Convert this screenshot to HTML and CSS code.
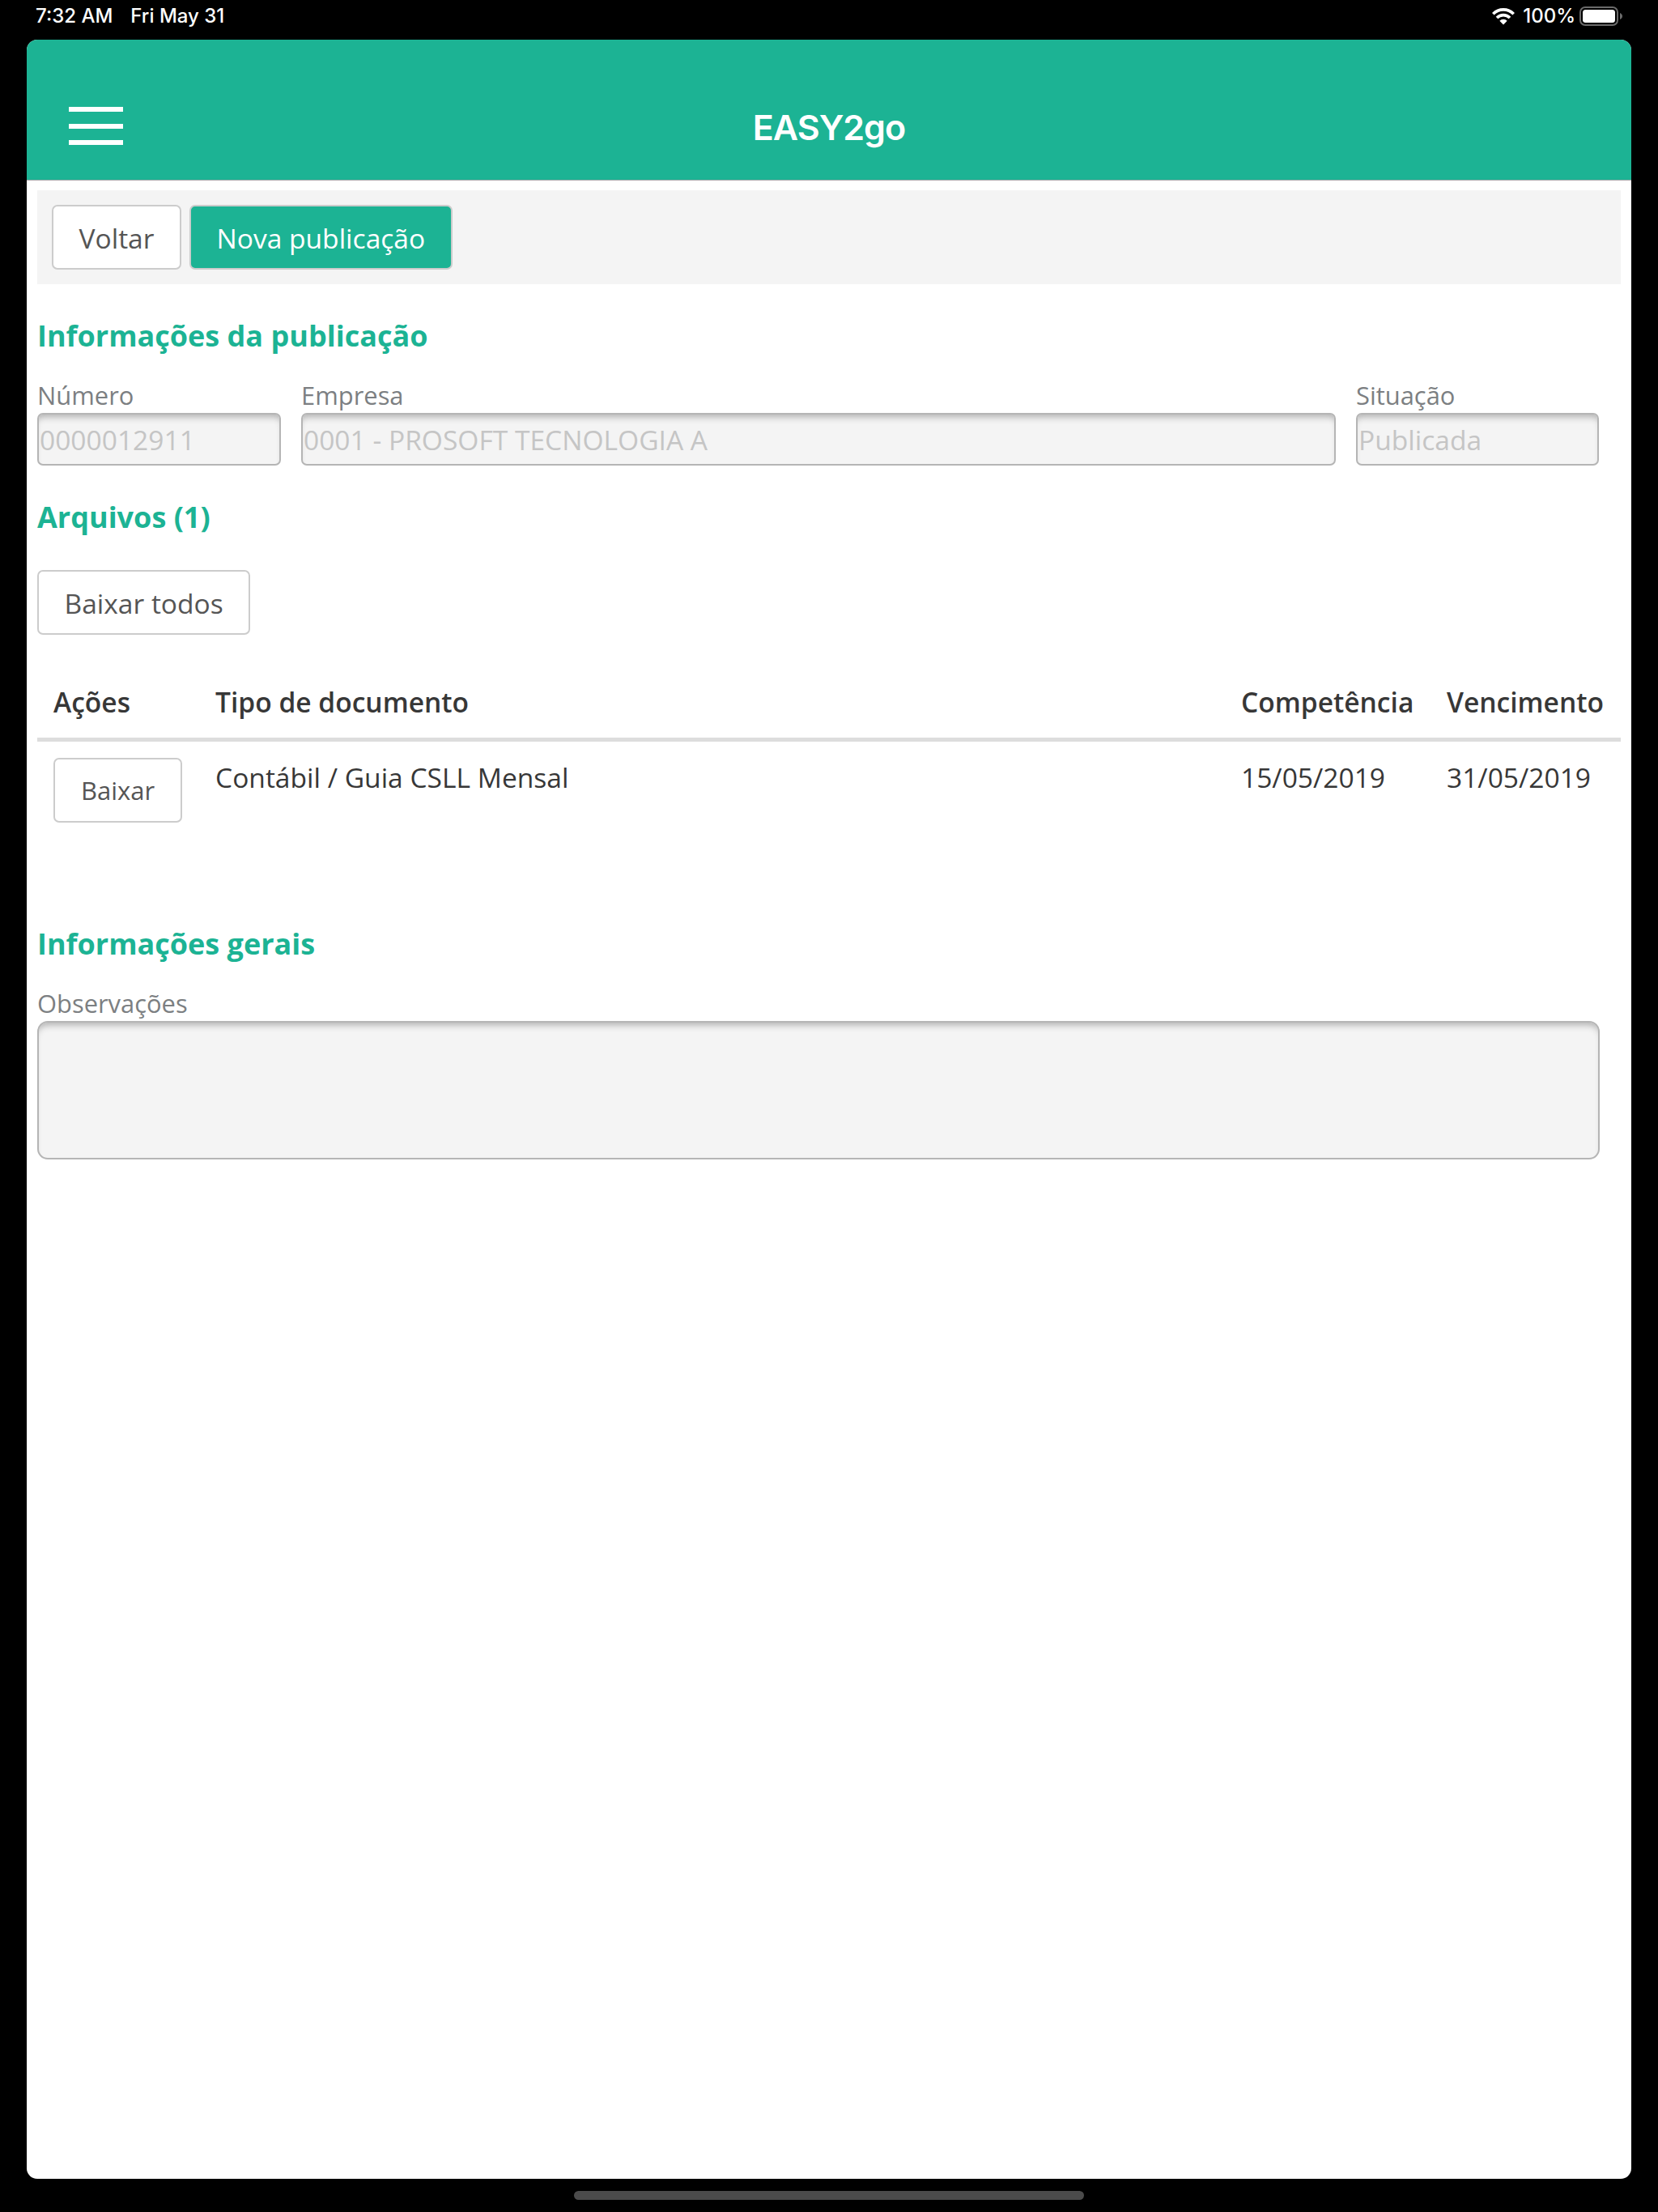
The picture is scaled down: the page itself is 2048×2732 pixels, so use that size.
FILE: index.html
```html
<!DOCTYPE html>
<html lang="pt-BR">
    <head>
        <meta charset="UTF-8">
        <title>EASY2go</title>
        <link rel="stylesheet" href="styles.css">
    </head>
    <body>
        <div class="status-bar">
            <div class="status-left">
                <span class="status-time">7:32 AM</span>
                <span class="status-date">Fri May 31</span>
            </div>
            <div class="status-right">
                <svg class="wifi" viewBox="0 0 28 21" width="28" height="21">
                    <g fill="none" stroke="#fff" stroke-width="3.7">
                        <path d="M1.3 7.2a18 18 0 0 1 25.4 0"/>
                        <path d="M6 12a11.4 11.4 0 0 1 16 0"/>
                    </g>
                    <path fill="#fff" d="M14 20.5l-4.7-4.8a6.8 6.8 0 0 1 9.4 0z"/>
                </svg>
                <span class="status-percent">100%</span>
                <svg class="battery" viewBox="0 0 54 24" width="54" height="24">
                    <rect x="1" y="1" width="46" height="22" rx="6" fill="none" stroke="#6b6b6b" stroke-width="2"/>
                    <rect x="4" y="4" width="40" height="16" rx="3.5" fill="#fff"/>
                    <path fill="#6b6b6b" d="M50 8c4 1.5 4 6.500 0 8z"/>
                </svg>
            </div>
        </div>
        <div class="app">
            <header class="app-header">
                <div class="menu-button">
                    <span></span>
                    <span></span>
                    <span></span>
                </div>
                <div class="app-title">EASY2go</div>
            </header>
            <main class="content">
                <div class="toolbar">
                    <button class="btn">Voltar</button>
                    <button class="btn btn-primary">Nova publicação</button>
                </div>

                <h2>Informações da publicação</h2>
                <div class="fields">
                    <div class="field">
                        <label for="numero">Número</label>
                        <input id="numero" type="text" value="0000012911" disabled>
                    </div>
                    <div class="field">
                        <label for="empresa">Empresa</label>
                        <input id="empresa" type="text" value="0001 - PROSOFT TECNOLOGIA A" disabled>
                    </div>
                    <div class="field">
                        <label for="situacao">Situação</label>
                        <input id="situacao" type="text" value="Publicada" disabled>
                    </div>
                </div>

                <h2>Arquivos (1)</h2>
                <button class="btn btn-all">Baixar todos</button>
                <table class="files">
                    <thead>
                        <tr>
                            <th class="col-actions">Ações</th>
                            <th>Tipo de documento</th>
                            <th class="col-period">Competência</th>
                            <th class="col-due">Vencimento</th>
                        </tr>
                    </thead>
                    <tbody>
                        <tr>
                            <td class="cell-actions"><button class="btn btn-small">Baixar</button></td>
                            <td>Contábil / Guia CSLL Mensal</td>
                            <td>15/05/2019</td>
                            <td>31/05/2019</td>
                        </tr>
                    </tbody>
                </table>

                <h2 class="general">Informações gerais</h2>
                <div class="field field-notes">
                    <label for="observacoes">Observações</label>
                    <textarea id="observacoes" disabled></textarea>
                </div>
            </main>
        </div>
        <div class="home-indicator"></div>
    </body>
</html>
```

FILE: styles.css
```css
* {
    box-sizing: border-box;
}

body {
    margin: 0;
    height: 2732px;
    background-color: black;
    display: flex;
    flex-direction: column;
    font-family: "Open Sans", sans-serif;
    font-size: 33.55px;
    color: #373737;
}

/* status bar */
.status-bar {
    height: 49px;
    padding: 0 43px 0 44px;
    display: flex;
    justify-content: space-between;
    color: white;
    font-family: Inter, sans-serif;
    font-size: 24px;
    font-weight: 500;
    line-height: 40px;
}

.status-left,
.status-right {
    display: flex;
    height: 40px;
    align-items: center;
}

.status-left {
    gap: 22px;
}

.wifi {
    margin-right: 10px;
}

.battery {
    margin-left: 5px;
}

/* app window */
.app {
    height: 2642px;
    margin: 0 33px;
    background-color: white;
    border-radius: 13px;
    overflow: hidden;
}

.app-header {
    height: 174px;
    padding: 40px 52px 0;
    display: grid;
    grid-template-columns: 67px 1fr 67px;
    align-items: center;
    background-color: #1cb394;
    border-bottom: 1px solid #a7a7aa;
}

.menu-button {
    display: flex;
    flex-direction: column;
    gap: 14.5px;
}

.menu-button span {
    height: 6px;
    background-color: white;
}

.app-title {
    padding-top: 2px;
    text-align: center;
    color: white;
    font-family: Inter, sans-serif;
    font-size: 43px;
    font-weight: 600;
    letter-spacing: -1px;
    line-height: 52px;
}

.content {
    padding: 12px 13px;
}

.toolbar {
    height: 116px;
    padding: 18px;
    display: flex;
    gap: 10px;
    background-color: #f4f4f4;
}

.btn {
    height: 80px;
    padding: 1px 31.5px 0;
    border: 2px solid #ccc;
    border-radius: 7px;
    background-color: white;
    color: #555;
    font: inherit;
}

.btn-primary {
    background-color: #1cb394;
    color: white;
}

.btn-small {
    display: block;
    padding: 0 32px;
    font-size: 31px;
}

.btn-all {
    display: block;
    margin-top: 40px;
}

h2 {
    margin: 39px 0 0;
    color: #1cb394;
    font-size: 36px;
    font-weight: 700;
    line-height: 50px;
}

/* form fields */
.fields {
    display: grid;
    grid-template-columns: 301px 1278px 300px;
    column-gap: 25px;
    margin-top: 26px;
}

.field {
    display: flex;
    flex-direction: column;
}

.field label {
    color: #7c7f82;
    font-size: 30.9px;
    line-height: 44px;
}

.field input,
.field textarea {
    width: 100%;
    margin: 0;
    border: 2px solid #b5b5b5;
    border-radius: 7px;
    background-color: #f4f4f4;
    box-shadow: inset 0 8px 8px -5px #b0b0b0;
    color: #c5c5c5;
    font: inherit;
}

.field input {
    height: 65px;
    padding: 1px 0 0 1px;
}

.field textarea {
    height: 171px;
    border-radius: 13px;
    resize: none;
}

.field-notes {
    width: 1930px;
    margin-top: 26px;
}

/* files table */
.files {
    width: 100%;
    margin-top: 40px;
    border-collapse: separate;
    border-spacing: 0;
    table-layout: fixed;
    line-height: 45px;
}

.files th,
.files td {
    padding: 21px 0 21px 20px;
    text-align: left;
    vertical-align: top;
}

.files th {
    border-bottom: 5px solid #ddd;
    font-weight: 600;
}

.files td {
    padding-top: 22px;
}

.files td.cell-actions {
    padding-top: 20px;
}

.col-actions {
    width: 200px;
}

.col-period {
    width: 254px;
}

.col-due {
    width: 235px;
}

h2.general {
    margin-top: 104px;
}

.home-indicator {
    width: 630px;
    height: 11px;
    margin: 15px auto 0;
    border-radius: 6px;
    background-color: #4b4b4b;
}
```
